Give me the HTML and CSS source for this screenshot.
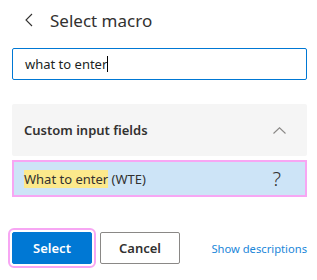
FILE: index.html
```html
<!DOCTYPE html>
<html lang="en">
<head>
  <meta charset="UTF-8">
  <meta name="viewport" content="width=device-width, initial-scale=1.0">
  <title>Select macro</title>
  <link rel="stylesheet" href="styles.css">
</head>
<body>
  <div class="header">
    <svg class="back" width="8" height="14" viewBox="0 0 8 14">
      <path d="M7 1 L1 7 L7 13" fill="none" stroke="#323130" stroke-width="1.1"/>
    </svg>
    <h1>Select macro</h1>
  </div>

  <div class="search">
    <span>what to enter</span><span class="caret"></span>
  </div>

  <div class="group">
    <span class="group-title">Custom input fields</span>
    <svg class="chevron" width="13" height="7" viewBox="0 0 13 7">
      <path d="M0.5 6.5 L6.5 0.8 L12.5 6.5" fill="none" stroke="#8a8886" stroke-width="1.1"/>
    </svg>
  </div>

  <div class="macro-row">
    <span><mark>What to enter</mark> (WTE)</span>
    <span class="help">?</span>
  </div>

  <div class="actions">
    <button class="btn btn-primary">Select</button>
    <button class="btn btn-default">Cancel</button>
    <a class="link" href="#">Show descriptions</a>
  </div>
</body>
</html>
```

FILE: styles.css
```css
:root {
  --blue: #0078d4;
  --text: #323130;
  --pink: #f7a6f3;
}

* {
  margin: 0;
  padding: 0;
  box-sizing: border-box;
}

body {
  font-family: "Segoe UI", "Noto Sans", sans-serif;
  width: 317px;
  height: 280px;
  padding: 0 10px 0 12px;
  color: var(--text);
  background: #fff;
  font-size: 13px;
}

.header {
  display: flex;
  align-items: center;
  height: 40px;
  padding-left: 13px;
}

.back {
  margin-right: 17px;
}

h1 {
  font-size: 17px;
  font-weight: 400;
  color: var(--text);
}

.search {
  display: flex;
  align-items: center;
  height: 32px;
  margin-top: 8px;
  padding-left: 12px;
  border: 1px solid var(--blue);
  border-radius: 2px;
  color: #201f1e;
}

.caret {
  display: inline-block;
  width: 1px;
  height: 16px;
  background: #000;
}

.group {
  display: flex;
  justify-content: space-between;
  align-items: center;
  height: 52px;
  margin-top: 24px;
  padding: 0 21px 0 12px;
  background: #f5f5f5;
  border-radius: 2px;
}

.group-title {
  font-weight: 600;
}

.macro-row {
  display: flex;
  justify-content: space-between;
  align-items: center;
  height: 37px;
  margin-top: 4px;
  padding: 0 24px 0 10px;
  background: #cde4f7;
  border: 2px solid var(--pink);
}

mark {
  background: #fce98c;
  color: inherit;
}

.help {
  font-size: 20px;
  font-weight: 300;
}

.actions {
  display: flex;
  align-items: center;
  margin-top: 35px;
}

.btn {
  width: 80px;
  height: 32px;
  border-radius: 2px;
  font-family: inherit;
  font-size: 13px;
  font-weight: 600;
}

.btn-primary {
  background: var(--blue);
  border: 1px solid var(--blue);
  color: #fff;
  outline: 2px solid var(--pink);
  outline-offset: 2px;
}

.btn-default {
  margin-left: 8px;
  background: #fff;
  border: 1px solid #8a8886;
  color: var(--text);
}

.link {
  margin-left: auto;
  font-size: 11.2px;
  color: #1a86d9;
  text-decoration: none;
}
```
